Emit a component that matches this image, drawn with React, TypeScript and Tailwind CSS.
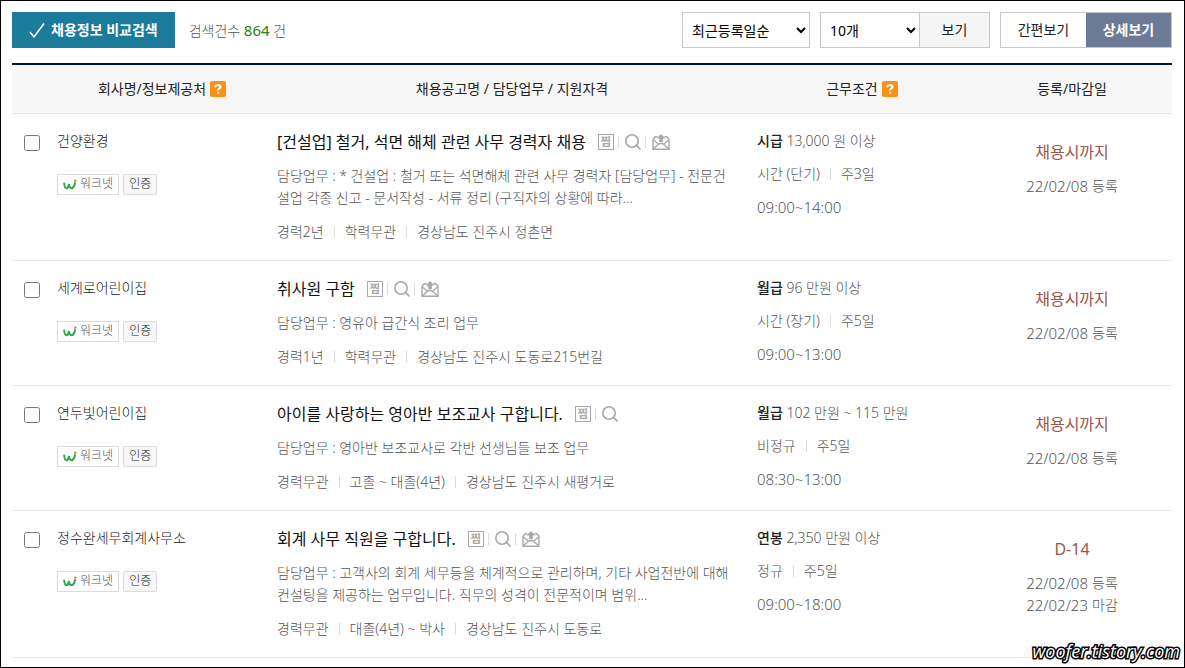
import React, { useState } from 'react';

interface Job {
  id: number;
  company: string;
  title: string;
  mail: boolean;
  duty: string;
  meta: string[];
  payType: string;
  amount: string;
  terms: string[];
  hours: string;
  deadline: string;
  dates: [string, string][];
}

const jobs: Job[] = [
  {
    id: 1,
    company: '건양환경',
    title: '[건설업] 철거, 석면 해체 관련 사무 경력자 채용',
    mail: true,
    duty: '담당업무 : * 건설업 : 철거 또는 석면해체 관련 사무 경력자 [담당업무] - 전문건설업 각종 신고 - 문서작성 - 서류 정리 (구직자의 상황에 따라...',
    meta: ['경력2년', '학력무관', '경상남도 진주시 정촌면'],
    payType: '시급',
    amount: '13,000 원 이상',
    terms: ['시간 (단기)', '주3일'],
    hours: '09:00~14:00',
    deadline: '채용시까지',
    dates: [['22/02/08', '등록']],
  },
  {
    id: 2,
    company: '세계로어린이집',
    title: '취사원 구함',
    mail: true,
    duty: '담당업무 : 영유아 급간식 조리 업무',
    meta: ['경력1년', '학력무관', '경상남도 진주시 도동로215번길'],
    payType: '월급',
    amount: '96 만원 이상',
    terms: ['시간 (장기)', '주5일'],
    hours: '09:00~13:00',
    deadline: '채용시까지',
    dates: [['22/02/08', '등록']],
  },
  {
    id: 3,
    company: '연두빛어린이집',
    title: '아이를 사랑하는 영아반 보조교사 구합니다.',
    mail: false,
    duty: '담당업무 : 영아반 보조교사로 각반 선생님들 보조 업무',
    meta: ['경력무관', '고졸 ~ 대졸(4년)', '경상남도 진주시 새평거로'],
    payType: '월급',
    amount: '102 만원 ~ 115 만원',
    terms: ['비정규', '주5일'],
    hours: '08:30~13:00',
    deadline: '채용시까지',
    dates: [['22/02/08', '등록']],
  },
  {
    id: 4,
    company: '정수완세무회계사무소',
    title: '회계 사무 직원을 구합니다.',
    mail: true,
    duty: '담당업무 : 고객사의 회계 세무등을 체계적으로 관리하며, 기타 사업전반에 대해 컨설팅을 제공하는 업무입니다. 직무의 성격이 전문적이며 범위...',
    meta: ['경력무관', '대졸(4년) ~ 박사', '경상남도 진주시 도동로'],
    payType: '연봉',
    amount: '2,350 만원 이상',
    terms: ['정규', '주5일'],
    hours: '09:00~18:00',
    deadline: 'D-14',
    dates: [['22/02/08', '등록'], ['22/02/23', '마감']],
  },
];

const Help: React.FC<{ label: string }> = ({ label }) => (
  <button aria-label={label} className="flex size-4 items-center justify-center rounded-xs bg-[#ff9015]">
    <svg width="8" height="10" viewBox="0 0 8 10" fill="none" stroke="#fff" strokeWidth="2">
      <path d="M1.2 3.2C1.3 1.7 2.4 1 3.8 1C5.3 1 6.4 1.8 6.4 3C6.4 4.6 4 4.5 4 6.6M4 7.8V9.8" />
    </svg>
  </button>
);

const Divided: React.FC<{ items: string[] }> = ({ items }) => (
  <ul className="flex items-center">
    {items.map((item) => (
      <li key={item} className="group flex items-center">
        <span className="mx-2.5 h-3 w-px bg-[#dcdcdc] group-first:hidden" />
        {item}
      </li>
    ))}
  </ul>
);

const Bar = () => <span className="h-3 w-px bg-[#dcdcdc]" />;

const Actions: React.FC<{ mail: boolean }> = ({ mail }) => (
  <span className="flex items-center text-[#a8a8a8]">
    <button className="mr-1 flex size-4 items-center justify-center border border-[#a8a8a8] text-[11px] leading-none font-bold">찜</button>
    <Bar />
    <button aria-label="미리보기" className="mr-1 ml-1.5">
      <svg width="16" height="16" viewBox="0 0 16 16" fill="none" stroke="currentColor" strokeWidth="1.6">
        <circle cx="7" cy="7" r="6.2" />
        <path d="M11.4 11.4L15.5 15.5" />
      </svg>
    </button>
    {mail && (
      <>
        <Bar />
        <button aria-label="메일 보내기" className="ml-1.5">
          <svg width="18" height="16" viewBox="0 0 18 16" fill="none" stroke="currentColor" strokeWidth="1.4">
            <path d="M1 5.2V15.3H17V5.2" />
            <path d="M1 5.5L3.2 2.8H5.5M17 5.5L14.8 2.8H12.5" />
            <path d="M1 5.8L6.5 10.2Q9 8.8 11.5 10.2L17 5.8M1 15L6.5 10.2M17 15L11.5 10.2" />
            <path d="M9 0L13.5 4.5H10.8V8.3H7.2V4.5H4.5Z" fill="currentColor" stroke="none" />
          </svg>
        </button>
      </>
    )}
  </span>
);

const WorknetLogo = () => (
  <svg width="14" height="11" viewBox="0 0 14 11" fill="none" strokeLinecap="round">
    <path d="M1.2 4.5C1.5 7.6 2.2 9.2 3.4 9.2S5.6 7.6 6 5C6.2 7.8 6.9 9.2 8.2 9.2C10.3 9.2 11.5 7 12 4" stroke="#2bab4a" strokeWidth="2" />
    <circle cx="12.3" cy="1.6" r="1.2" fill="#f26522" />
  </svg>
);

const JobRow: React.FC<{ job: Job }> = ({ job }) => (
  <tr className="border-b border-[#e4e9ee] align-top">
    <td className="pt-[21px] pl-3">
      <input type="checkbox" aria-label={`${job.company} 선택`} className="block size-4" />
    </td>
    <td className="px-[5px] pt-4">
      <a href="#" className="block text-[#222]">{job.company}</a>
      <div className="mt-[22px] flex gap-1 text-xs">
        <span className="flex h-[21px] items-center gap-[3px] border border-[#dcdcdc] px-[5px]">
          <WorknetLogo />
          워크넷
        </span>
        <span className="flex h-[21px] items-center rounded-xs border border-[#dcdcdc] bg-[#f7f7f7] px-[5px] text-[#222]">인증</span>
      </div>
    </td>
    <td className="pt-4 pr-5 pb-[17px] pl-[5px]">
      <div className="flex h-6 items-center gap-3">
        <a href="#" className="text-base leading-6 font-normal text-[#111]">{job.title}</a>
        <Actions mail={job.mail} />
      </div>
      <p className="mt-[11px] mb-3 break-all">{job.duty}</p>
      <Divided items={job.meta} />
    </td>
    <td className="px-[5px] pt-4">
      <div className="flex flex-col gap-[11px]">
        <p>
          <strong className="font-medium text-[#222]">{job.payType}</strong> {job.amount}
        </p>
        <Divided items={job.terms} />
        <p className="text-[15px]">{job.hours}</p>
      </div>
    </td>
    <td className="pt-[27px] text-center">
      <p className="mb-3 text-base leading-[22px] font-normal text-[#9b5548]">{job.deadline}</p>
      {job.dates.map(([date, label]) => (
        <p key={label} className="flex items-center justify-center gap-1">
          <span className="text-[15px] leading-[22px]">{date}</span> {label}
        </p>
      ))}
    </td>
  </tr>
);

export default function App() {
  const [view, setView] = useState('상세보기');

  return (
    <main className="relative min-h-screen border border-black bg-white pt-[11px] pr-3 pl-[11px] font-['Noto_Sans','Noto_Sans_CJK_KR',sans-serif] text-sm leading-[22px] font-light text-[#555]">
      <div className="flex h-9 items-center justify-between">
        <div className="flex items-center gap-3.5">
          <button className="flex h-9 items-center gap-1.5 bg-[#1a7b9b] px-[17px] font-bold text-white">
            <svg width="16" height="16" viewBox="0 0 16 16" fill="none" stroke="currentColor" strokeWidth="1.5">
              <path d="M1 10L5 15L15 1.5" />
            </svg>
            채용정보 비교검색
          </button>
          <p>
            검색건수 <span className="text-[15px] font-normal text-[#2e7d1e]">864</span> 건
          </p>
        </div>
        <div className="flex gap-2.5 text-[#222]">
          <select aria-label="정렬" className="h-9 w-32 border border-[#c8c8c8] bg-white px-[5px] font-normal text-black">
            <option>최근등록일순</option>
            <option>마감일순</option>
          </select>
          <div className="flex">
            <select aria-label="목록 개수" className="h-9 w-[100px] border border-[#c8c8c8] bg-white px-[5px] font-normal text-black">
              <option>10개</option>
              <option>30개</option>
              <option>50개</option>
            </select>
            <button className="-ml-px h-9 w-[71px] border border-[#c8c8c8] bg-[#f5f5f5] font-normal">보기</button>
          </div>
          <div className="flex border border-[#c8c8c8]">
            {['간편보기', '상세보기'].map((name) => (
              <button
                key={name}
                onClick={() => setView(name)}
                className={`w-[85px] ${view === name ? 'bg-[#6c7a96] font-bold text-white' : 'font-normal'}`}
              >
                {name}
              </button>
            ))}
          </div>
        </div>
      </div>

      <table className="mt-[15px] w-full table-fixed border-collapse border-t-2 border-[#001a33]">
        <colgroup>
          <col className="w-10" />
          <col className="w-[220px]" />
          <col />
          <col className="w-[220px]" />
          <col className="w-[200px]" />
        </colgroup>
        <thead className="bg-[#f7f7f7] text-[#222]">
          <tr className="h-[49px] border-b border-[#e5e5e5]">
            <td />
            <th className="font-normal">
              <div className="flex items-center justify-center gap-1">회사명/정보제공처 <Help label="정보제공처 도움말" /></div>
            </th>
            <th className="font-normal">채용공고명 / 담당업무 / 지원자격</th>
            <th className="font-normal">
              <div className="flex items-center justify-center gap-1">근무조건 <Help label="근무조건 도움말" /></div>
            </th>
            <th className="font-normal">등록/마감일</th>
          </tr>
        </thead>
        <tbody>
          {jobs.map((job) => (
            <JobRow key={job.id} job={job} />
          ))}
        </tbody>
      </table>

      <span className="absolute right-1 bottom-1.5 font-['Open_Sans',sans-serif] text-lg leading-5 font-normal text-white italic [paint-order:stroke_fill] [-webkit-text-stroke:3px_#000]">
        woofer.tistory.com
      </span>
    </main>
  );
}
